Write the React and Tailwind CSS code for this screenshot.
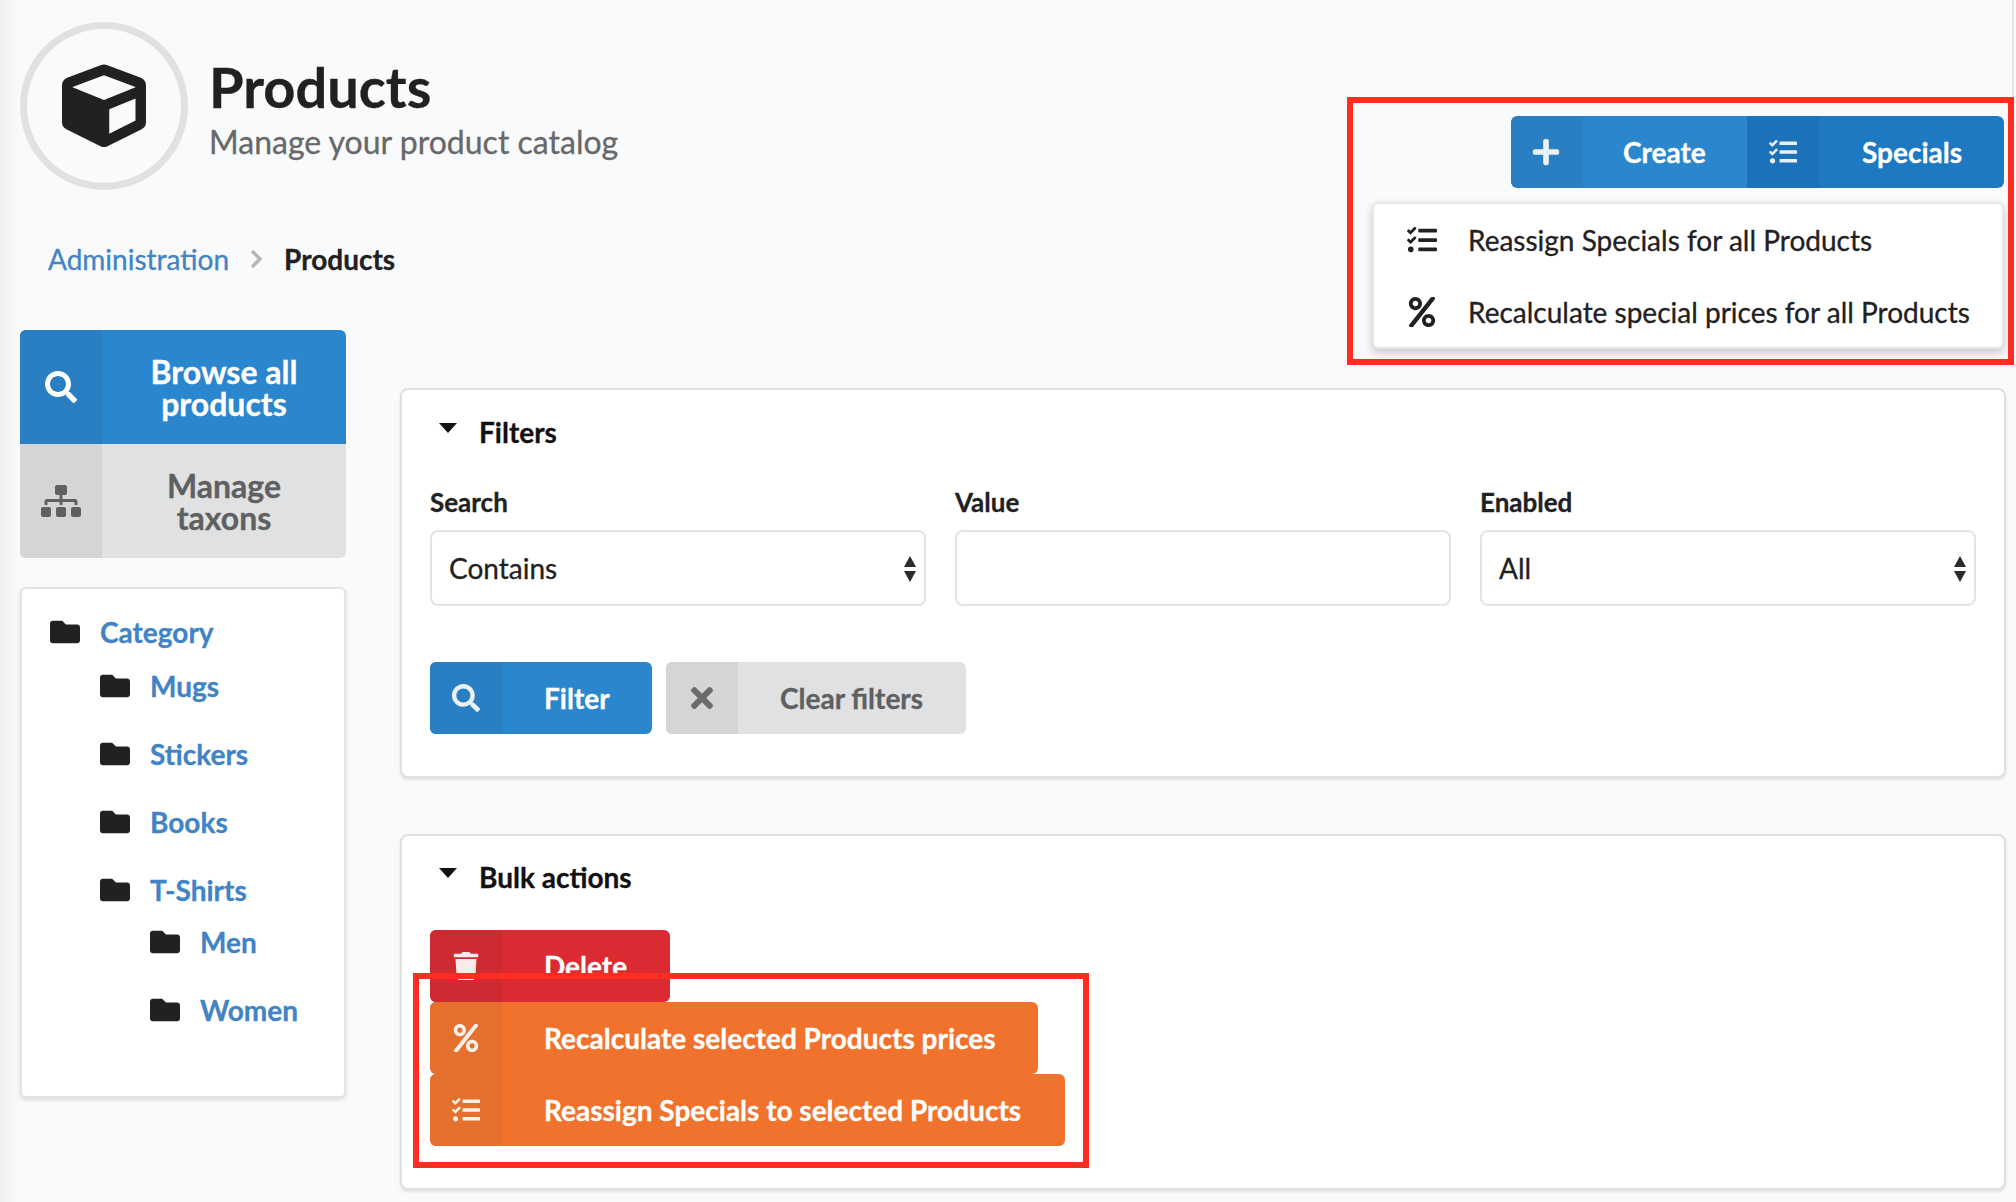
import { FaCube, FaSearch, FaSitemap, FaPlus, FaTasks, FaPercent, FaTrash, FaFolder, FaTimes } from 'react-icons/fa';

const IconButton = ({ icon: Icon, label, colors, iconCol, iconSize = 28, className = '' }) => (
  <button className={`flex h-[72px] items-stretch rounded-[6px] overflow-hidden font-bold text-[28px] ${colors} ${className}`}>
    <span className={`flex w-[72px] shrink-0 items-center justify-center ${iconCol}`}>
      <Icon size={iconSize} className="opacity-90" />
    </span>
    <span className="flex items-center pl-[42px] pr-[42px] whitespace-nowrap">{label}</span>
  </button>
);

const Field = ({ label, children }) => (
  <div className="flex-1">
    <div className="text-[26px] font-bold leading-[28px] text-[#212121] mb-[14px]">{label}</div>
    {children}
  </div>
);

const SelectBox = ({ value }) => (
  <div className="relative flex h-[76px] items-center rounded-[8px] border-2 border-[#e2e3e4] bg-white pl-[17px] text-[28px] text-[#212121]">
    {value}
    <svg className="absolute right-[7px] top-[24px]" width="14" height="26" viewBox="0 0 14 26">
      <path d="M7 0 L13 11 L1 11 Z M7 26 L1 15 L13 15 Z" fill="#2b2b2b" />
    </svg>
  </div>
);

const TreeRow = ({ label, indent, className = '' }) => (
  <div className={`flex items-center ${indent} ${className}`}>
    <FaFolder size={30} className="w-[30px] text-[#212121] shrink-0" />
    <a className="ml-[20px] text-[28px] font-bold leading-[34px] text-[#4183c4]">{label}</a>
  </div>
);

const SideItem = ({ icon: Icon, iconSize, lines, colors, iconCol, className = '' }) => (
  <div className={`flex ${colors} ${className}`}>
    <span className={`flex w-[82px] shrink-0 items-center justify-center ${iconCol}`}>
      <Icon size={iconSize} />
    </span>
    <span className="flex flex-1 items-center justify-center pt-[2px] text-center font-bold text-[32px] leading-[32px]">
      {lines[0]}<br />{lines[1]}
    </span>
  </div>
);

const Caret = () => (
  <svg className="ml-[9px] -mt-[8px]" width="18" height="10" viewBox="0 0 18 10">
    <path d="M0 0 H18 L9 10 Z" fill="#111111" />
  </svg>
);

const App = () => {
  return (
    <div
      className="relative w-[2016px] h-[1202px] overflow-hidden bg-[#f9fafb] [-webkit-text-stroke:0.3px]"
      style={{ fontFamily: 'Lato, "Open Sans", sans-serif' }}
    >
      {/* edge shading */}
      <div className="absolute inset-y-0 left-0 w-[20px] bg-gradient-to-r from-[#f0f1f3] to-[#f9fafb]" />
      <div className="absolute right-[2px] top-0 h-[100px] w-[2px] bg-[#e4e5e6]" />

      {/* header */}
      <div className="relative flex justify-between pl-[20px] pr-[12px] pt-[22px]">
        <div className="flex">
          <div className="flex h-[168px] w-[168px] items-center justify-center rounded-full border-[7px] border-[#e0e1e2]">
            <FaCube size={84} className="text-[#212121]" />
          </div>
          <div className="ml-[21px] pt-[35px]">
            <div className="text-[56px] font-bold leading-[60px] text-[#212121]">Products</div>
            <div className="mt-[5px] text-[32px] leading-[40px] text-[#676869]">Manage your product catalog</div>
          </div>
        </div>

        <div className="relative mt-[94px] self-start flex rounded-[6px] overflow-hidden text-white">
          <IconButton icon={FaPlus} iconSize={30} label="Create" colors="bg-[#2b87cd]" iconCol="bg-[#2a7fc2] pr-[3px]" className="rounded-r-none w-[236px] [&>span:last-child]:pl-[40px]" />
          <IconButton icon={FaTasks} label="Specials" colors="bg-[#1d79c2]" iconCol="bg-[#1b72b8]" className="rounded-l-none w-[257px] [&>span:last-child]:pl-[43px]" />
        </div>
      </div>

      {/* dropdown menu */}
      <div className="absolute left-[1372px] top-[202px] w-[632px] h-[147px] rounded-[6px] border-2 border-[#e4e5e6] bg-white shadow-[0_4px_10px_rgba(0,0,0,0.2)] text-[28px] text-[#212121]">
        <div className="flex h-[72px] items-center">
          <FaTasks size={30} className="ml-[32px] w-[32px]" />
          <span className="ml-[30px]">Reassign Specials for all Products</span>
        </div>
        <div className="flex h-[72px] items-center">
          <FaPercent size={30} className="ml-[32px] w-[32px]" />
          <span className="ml-[30px]">Recalculate special prices for all Products</span>
        </div>
      </div>

      {/* breadcrumb */}
      <div className="relative mt-[51px] flex items-center pl-[48px] text-[28px] leading-[36px]">
        <a className="text-[#4183c4]">Administration</a>
        <svg className="ml-[21px] mr-[22px]" width="12" height="20" viewBox="0 0 12 20">
          <path d="M2 2 L10 10 L2 18" fill="none" stroke="#b5b6b7" strokeWidth="3.5" />
        </svg>
        <span className="font-bold text-[#212121]">Products</span>
      </div>

      <div className="relative mt-[53px] flex items-start pl-[20px]">
        {/* sidebar */}
        <div className="w-[326px] shrink-0">
          <div className="rounded-[6px] overflow-hidden">
            <SideItem icon={FaSearch} iconSize={32} lines={['Browse all', 'products']} colors="bg-[#2b87cd] text-white" iconCol="bg-[#2a7fc2]" className="h-[114px]" />
            <SideItem icon={FaSitemap} iconSize={40} lines={['Manage', 'taxons']} colors="bg-[#e0e1e2] text-[#5f6061]" iconCol="bg-[#d4d5d6]" className="h-[114px]" />
          </div>

          <div className="mt-[29px] h-[511px] rounded-[6px] border-2 border-[#e2e3e4] bg-white pl-[28px] pt-[26px] shadow-[0_2px_4px_rgba(0,0,0,0.12)]">
            <TreeRow label="Category" indent="" />
            <TreeRow label="Mugs" indent="ml-[50px]" className="mt-[20px]" />
            <TreeRow label="Stickers" indent="ml-[50px]" className="mt-[34px]" />
            <TreeRow label="Books" indent="ml-[50px]" className="mt-[34px]" />
            <TreeRow label="T-Shirts" indent="ml-[50px]" className="mt-[34px]" />
            <TreeRow label="Men" indent="ml-[100px]" className="mt-[18px]" />
            <TreeRow label="Women" indent="ml-[100px]" className="mt-[34px]" />
          </div>
        </div>

        {/* main */}
        <div className="ml-[54px] w-[1606px] mt-[58px]">
          <div className="h-[390px] rounded-[8px] border-2 border-[#dfe0e1] bg-white px-[28px] shadow-[0_2px_3px_rgba(0,0,0,0.1)]">
            <div className="flex h-[84px] items-center">
              <Caret />
              <span className="ml-[22px] text-[28px] font-bold text-[#111111]">Filters</span>
            </div>
            <div className="mt-[14px] flex gap-[29px]">
              <Field label="Search"><SelectBox value="Contains" /></Field>
              <Field label="Value">
                <div className="h-[76px] rounded-[8px] border-2 border-[#e2e3e4] bg-white" />
              </Field>
              <Field label="Enabled"><SelectBox value="All" /></Field>
            </div>
            <div className="mt-[56px] flex gap-[14px]">
              <IconButton icon={FaSearch} label="Filter" colors="bg-[#2b87cd] text-white" iconCol="bg-[#2a7fc2]" className="w-[222px]" />
              <IconButton icon={FaTimes} iconSize={32} label="Clear filters" colors="bg-[#e0e1e2] text-[#5f6061]" iconCol="bg-[#d4d5d6]" className="w-[300px]" />
            </div>
          </div>

          <div className="mt-[56px] h-[356px] rounded-[8px] border-2 border-[#dfe0e1] bg-white pl-[28px] shadow-[0_2px_3px_rgba(0,0,0,0.1)]">
            <div className="flex h-[82px] items-center">
              <Caret />
              <span className="ml-[22px] text-[28px] font-bold text-[#111111]">Bulk actions</span>
            </div>
            <div className="mt-[12px] flex flex-col items-start text-white">
              <IconButton icon={FaTrash} label="Delete" colors="bg-[#db2a31]" iconCol="bg-[#ce2a31]" className="w-[240px]" />
              <IconButton icon={FaPercent} label="Recalculate selected Products prices" colors="bg-[#f1722c]" iconCol="bg-[#e56f2c]" className="w-[608px]" />
              <IconButton icon={FaTasks} label="Reassign Specials to selected Products" colors="bg-[#f1722c]" iconCol="bg-[#e56f2c]" className="w-[635px]" />
            </div>
          </div>
        </div>
      </div>

      {/* red annotations */}
      <div className="absolute left-[1347px] top-[97px] h-[268px] w-[667px] border-[6px] border-[#ff2d1f]" />
      <div className="absolute left-[413px] top-[973px] h-[195px] w-[676px] border-[6px] border-[#ff2d1f]" />
    </div>
  );
};

export default App;
